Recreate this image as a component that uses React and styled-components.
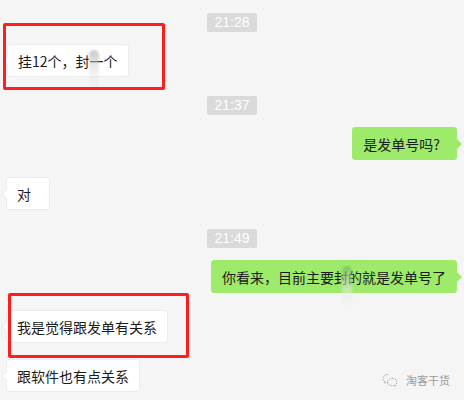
import React from 'react';
import styled, { createGlobalStyle } from 'styled-components';

const GlobalStyle = createGlobalStyle`
  html, body {
    margin: 0;
    padding: 0;
    background: #f5f5f5;
  }
  body {
    font-family: "Noto Sans CJK SC", "Noto Sans", sans-serif;
  }
`;

const Page = styled.div`
  position: relative;
  width: 464px;
  height: 400px;
  overflow: hidden;
  background: #f5f5f5;
  box-sizing: border-box;
  padding: 13px 6px 0 6px;
  display: flex;
  flex-direction: column;
`;

const Time = styled.div`
  align-self: center;
  height: 19px;
  line-height: 19px;
  padding: 0 7px;
  border-radius: 2px;
  background: #dadada;
  color: #fff;
  font-family: "Liberation Sans", Arial, sans-serif;
  font-size: 14px;
  margin-bottom: 12px;
`;

const Row = styled.div`
  display: flex;
  justify-content: ${(p) => (p.$mine ? 'flex-end' : 'flex-start')};
  margin-bottom: ${(p) => p.$after || 0}px;
  padding-right: ${(p) => (p.$mine ? '1px' : 0)};
`;

const Bubble = styled.div`
  position: relative;
  box-sizing: border-box;
  height: 33px;
  min-width: 44px;
  padding: 0 ${(p) => p.$padRight || 10}px 0 10px;
  line-height: 32px;
  font-size: 14px;
  color: #1b1b1b;
  border-radius: 3px;
  white-space: nowrap;
  background: ${(p) => (p.$mine ? '#9eea6a' : '#ffffff')};
  border: 1px solid ${(p) => (p.$mine ? '#9eea6a' : '#ececec')};

  &::before {
    content: '';
    position: absolute;
    top: 12px;
    width: 7px;
    height: 7px;
    background: inherit;
    transform: rotate(45deg);
    ${(p) =>
      p.$mine
        ? 'right: -4px; border-top: 1px solid #9eea6a; border-right: 1px solid #9eea6a;'
        : 'left: -4px; border-bottom: 1px solid #ececec; border-left: 1px solid #ececec;'}
  }
`;

const Mark = styled.div`
  position: absolute;
  border: 3px solid #ff1e1e;
  border-radius: 2px;
  pointer-events: none;
`;

const Smudge = styled.span`
  position: absolute;
  top: 5px;
  width: 10px;
  height: 42px;
  border-radius: 5px;
  filter: blur(1px);
  background: linear-gradient(
    to bottom,
    rgba(150, 150, 150, 0.5),
    rgba(225, 225, 225, 0.55) 45%,
    rgba(240, 240, 240, 0.2)
  );
`;

const Watermark = styled.div`
  position: absolute;
  right: 14px;
  bottom: 12px;
  display: flex;
  align-items: center;
  gap: 8px;
  color: #9a9a9a;
  font-size: 11px;
`;

function Annotated({ box, children }) {
  return (
    <div style={{ position: 'relative' }}>
      {children}
      <Mark style={box} />
    </div>
  );
}

export default function App() {
  return (
    <>
      <GlobalStyle />
      <Page>
        <Time>21:28</Time>
        <Row $after={19}>
          <Annotated box={{ left: -3, top: -21, right: -36, bottom: -13 }}>
            <Bubble style={{ marginLeft: 1 }}>
              挂12个，封一个
              <Smudge style={{ left: 81 }} />
            </Bubble>
          </Annotated>
        </Row>

        <Time>21:37</Time>
        <Row $mine $after={17}>
          <Bubble $mine $padRight={16}>是发单号吗?</Bubble>
        </Row>
        <Row $after={19}>
          <Bubble>对</Bubble>
        </Row>

        <Time>21:49</Time>
        <Row $mine $after={17}>
          <Bubble $mine>
            你看来，目前主要封的就是发单号了
            <Smudge style={{ left: 130, background: 'linear-gradient(to bottom, rgba(110,170,90,0.6), rgba(225,235,220,0.6) 55%, rgba(240,240,240,0.2))' }} />
          </Bubble>
        </Row>
        <Row $after={16}>
          <Annotated box={{ left: 2, top: -17, right: -21, bottom: -15 }}>
            <Bubble>我是觉得跟发单有关系</Bubble>
          </Annotated>
        </Row>
        <Row>
          <Bubble>跟软件也有点关系</Bubble>
        </Row>

        <Watermark>
          <svg width="16" height="15" viewBox="0 0 16 15" fill="none" stroke="#a8a8a8" strokeWidth="1" strokeDasharray="1.5 1">
            <path d="M6 1.5C3.2 1.5 1 3.3 1 5.6c0 1.3.7 2.4 1.8 3.1L2.4 10.3l1.9-1c.5.1 1 .2 1.5.2" />
            <path d="M10.2 5.3c2.6 0 4.7 1.7 4.7 3.8 0 1.2-.6 2.2-1.6 2.9l.4 1.4-1.7-.9c-.6.2-1.2.3-1.8.3-2.6 0-4.7-1.7-4.7-3.7s2.1-3.8 4.7-3.8z" />
          </svg>
          <span>淘客干货</span>
        </Watermark>
      </Page>
    </>
  );
}
